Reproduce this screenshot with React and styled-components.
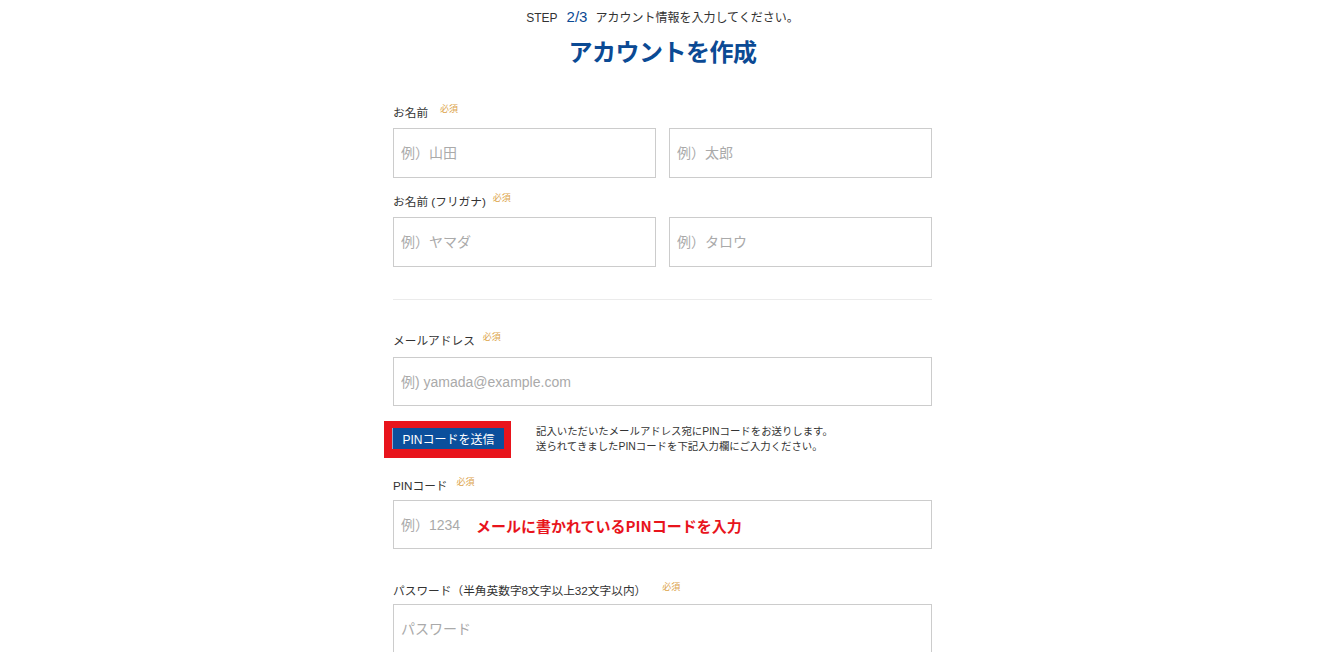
import React from "react";
import styled, { createGlobalStyle } from "styled-components";

const GlobalStyle = createGlobalStyle`
  html, body {
    margin: 0;
    padding: 0;
    background: #ffffff;
  }
  body {
    font-family: "Liberation Sans", "Noto Sans CJK JP", sans-serif;
    color: #333333;
  }
`;

const Page = styled.div`
  width: 539px;
  margin: 0 auto;
  padding-top: 8px;
`;

const Step = styled.div`
  text-align: center;
  font-size: 12px;
  line-height: 18px;
  color: #333;
  span {
    color: #0b4a94;
    font-size: 15px;
    margin: 0 8px 0 9px;
  }
`;

const Title = styled.h1`
  margin: 8px 0 0;
  text-align: center;
  font-family: "Noto Sans CJK JP", sans-serif;
  font-size: 24px;
  font-weight: 700;
  line-height: 32px;
  color: #0b4a94;
  letter-spacing: -0.5px;
`;

const Field = styled.div`
  margin-top: ${(p) => p.$top}px;
`;

const Label = styled.div`
  font-family: "Liberation Sans", "Noto Sans CJK JP", sans-serif;
  font-size: 11.7px;
  line-height: 16px;
  color: #333;
  display: flex;
  align-items: flex-start;
  margin-bottom: ${(p) => p.$gap || 7}px;
`;

const Required = styled.span`
  font-size: 9px;
  line-height: 10px;
  color: #dca44a;
  margin-left: ${(p) => p.$left || 8}px;
  margin-top: -1px;
`;

const Row = styled.div`
  display: grid;
  grid-template-columns: 1fr 1fr;
  gap: 13px;
`;

const InputWrap = styled.div`
  position: relative;
`;

const Input = styled.input`
  box-sizing: border-box;
  width: 100%;
  height: ${(p) => p.$h || 50}px;
  border: 1px solid #cccccc;
  border-radius: 0;
  padding: 0 7px;
  font-family: "Liberation Sans", "Noto Sans CJK JP", sans-serif;
  font-size: 14px;
  color: #333;
  outline: none;
  &::placeholder {
    color: #aaaaaa;
  }
`;

const Divider = styled.hr`
  border: none;
  border-top: 1px solid #ebebeb;
  margin: 32px 0 0;
`;

const PinRow = styled.div`
  display: flex;
  align-items: flex-start;
  margin: 15px 0 0 -9px;
`;

const Highlight = styled.div`
  background: #e8141c;
  padding: 7px 7px 9px 8px;
`;

const SendButton = styled.button`
  display: block;
  width: 112px;
  height: 21px;
  border: none;
  border-left: 1px solid #8fa9cf;
  background: #0b4f9c;
  color: #ffffff;
  font-family: "Liberation Sans", "Noto Sans CJK JP", sans-serif;
  font-size: 12px;
  padding: 0;
  cursor: pointer;
`;

const Note = styled.p`
  margin: 3px 0 0 25px;
  font-size: 10.4px;
  line-height: 15px;
  color: #333;
`;

const Annotation = styled.div`
  position: absolute;
  left: 83px;
  top: 50%;
  transform: translateY(-50%);
  font-family: "Noto Sans CJK JP", sans-serif;
  font-weight: 700;
  font-size: 15px;
  color: #e8141c;
  pointer-events: none;
  white-space: nowrap;
`;

export default function App() {
  return (
    <>
      <GlobalStyle />
      <Page>
        <Step>
          STEP<span>2/3</span>アカウント情報を入力してください。
        </Step>
        <Title>アカウントを作成</Title>

        <Field $top={38}>
          <Label>
            お名前<Required $left={12}>必須</Required>
          </Label>
          <Row>
            <Input placeholder="例）山田" />
            <Input placeholder="例）太郎" />
          </Row>
        </Field>

        <Field $top={16}>
          <Label>
            お名前 (フリガナ)<Required $left={7}>必須</Required>
          </Label>
          <Row>
            <Input placeholder="例）ヤマダ" />
            <Input placeholder="例）タロウ" />
          </Row>
        </Field>

        <Divider />

        <Field $top={33}>
          <Label $gap={8}>
            メールアドレス<Required>必須</Required>
          </Label>
          <Input $h={49} placeholder="例) yamada@example.com" />
        </Field>

        <PinRow>
          <Highlight>
            <SendButton>PINコードを送信</SendButton>
          </Highlight>
          <Note>
            記入いただいたメールアドレス宛にPINコードをお送りします。
            <br />
            送られてきましたPINコードを下記入力欄にご入力ください。
          </Note>
        </PinRow>

        <Field $top={20}>
          <Label $gap={6}>
            PINコード<Required $left={9}>必須</Required>
          </Label>
          <InputWrap>
            <Input $h={49} placeholder="例）1234" />
            <Annotation>メールに書かれているPINコードを入力</Annotation>
          </InputWrap>
        </Field>

        <Field $top={34}>
          <Label $gap={5}>
            パスワード（半角英数字8文字以上32文字以内）
            <Required $left={16}>必須</Required>
          </Label>
          <Input type="password" placeholder="パスワード" />
        </Field>
      </Page>
    </>
  );
}
